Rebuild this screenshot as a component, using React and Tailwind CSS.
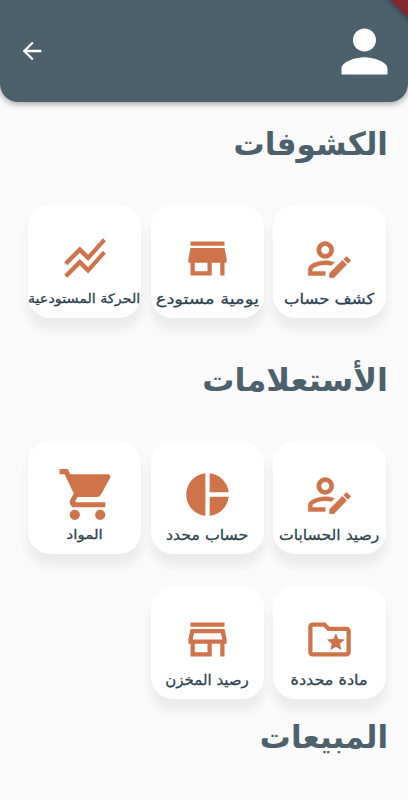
import React from "react";
import {
  MdArrowBack,
  MdOutlineFolderSpecial,
  MdOutlineStore,
  MdPerson,
  MdPieChart,
  MdShoppingCart,
  MdStackedLineChart,
  MdStore,
} from "react-icons/md";

function UserEditIcon({ className }) {
  return (
    <svg viewBox="0 0 24 24" fill="currentColor" className={className}>
      <path d="M2 17v3h8v-1.9H3.9V17c0-.64 3.13-2.1 6.1-2.1.96.01 1.91.14 2.83.38l1.52-1.52C12.95 13.28 11.49 13 10 13c-2.67 0-8 1.33-8 4M10 4C7.79 4 6 5.79 6 8s1.79 4 4 4 4-1.79 4-4-1.79-4-4-4m0 6c-1.1 0-2-.9-2-2s.9-2 2-2 2 .9 2 2-.9 2-2 2m11.7 3.35-1 1-2.05-2.05 1-1c.21-.21.56-.21.77 0l1.28 1.28c.21.21.21.56 0 .77M12 18.94V21h2.06l6.06-6.12-2.05-2.05L12 18.94" />
    </svg>
  );
}

const sections = [
  {
    title: "الكشوفات",
    titleClass: "mb-[36px] scale-x-[0.97]",
    items: [
      { label: "كشف حساب", icon: UserEditIcon, iconClass: "size-[51px] stroke-current stroke-[0.2]", labelClass: "text-[15px] scale-x-[1.1]" },
      { label: "يومية مستودع", icon: MdStore, iconClass: "size-[51px]", labelClass: "text-[15px] scale-x-[1.19]" },
      { label: "الحركة المستودعية", icon: MdStackedLineChart, iconClass: "size-[50px]", labelClass: "text-[13px] scale-x-[1.1]" },
    ],
  },
  {
    title: "الأستعلامات",
    titleClass: "mb-[36px]",
    items: [
      { label: "رصيد الحسابات", icon: UserEditIcon, iconClass: "size-[51px] stroke-current stroke-[0.2]", labelClass: "text-[15px] scale-x-[1.04]" },
      { label: "حساب محدد", icon: MdPieChart, iconClass: "size-[51px]", labelClass: "text-[15px] scale-x-[1.05]" },
      { label: "المواد", icon: MdShoppingCart, iconClass: "size-[61px] translate-x-[3px]", labelClass: "text-[13px] scale-x-[1.16]" },
      { label: "مادة محددة", icon: MdOutlineFolderSpecial, iconClass: "size-[51px]", labelClass: "text-[15px] scale-x-[1.07]" },
      { label: "رصيد المخزن", icon: MdOutlineStore, iconClass: "size-[51px]", labelClass: "text-[15px]" },
    ],
  },
  { title: "المبيعات", titleClass: "scale-x-[0.965]", items: [] },
];

function Header() {
  return (
    <header
      dir="ltr"
      className="relative flex h-[102px] items-center justify-between overflow-hidden rounded-b-[18px] bg-[#4d616c] pr-[9px] pl-[18px] text-white"
    >
      <MdArrowBack className="size-7" />
      <MdPerson className="size-[69px]" />
      <div className="absolute -top-[17px] -right-[27px] h-[26px] w-[60px] rotate-45 bg-[#84292e] shadow-[0_0_6px_rgba(0,0,0,0.5)]"></div>
    </header>
  );
}

function Card({ item }) {
  const Icon = item.icon;
  return (
    <button className="flex h-[113px] w-[113px] flex-col items-center rounded-[22px] bg-white shadow-[0_11px_10px_1px_rgba(0,0,0,0.06)]">
      <span className="flex h-[106px] w-full shrink-0 items-center justify-center text-[#cf734b]">
        <Icon className={`shrink-0 ${item.iconClass}`} />
      </span>
      <span
        className={`-mt-[22px] block leading-5 whitespace-nowrap text-[#2f434e] [-webkit-text-stroke:0.3px_#2f434e] ${item.labelClass}`}
      >
        {item.label}
      </span>
    </button>
  );
}

function Section({ section }) {
  return (
    <section>
      <h2 className={`mr-5 origin-right text-[32px] leading-[50px] font-bold whitespace-nowrap text-[#4d616c] ${section.titleClass}`}>
        {section.title}
      </h2>
      <div className="flex flex-wrap gap-x-[9.5px] gap-y-8 pr-[22px]">
        {section.items.map((item) => (
          <Card key={item.label} item={item} />
        ))}
      </div>
    </section>
  );
}

export default function App() {
  return (
    <div className="h-[800px] w-[408px] overflow-hidden bg-[#fafafa] font-['DejaVu_Sans',sans-serif]" dir="rtl">
      <div className="rounded-b-[18px] shadow-[0_2px_6px_rgba(0,0,0,0.35)]">
        <Header />
      </div>
      <main className="flex flex-col pt-[17px]">
        {sections.map((section, i) => (
          <div key={section.title} className={i === 0 ? "pb-[37px]" : "pb-[13px]"}>
            <Section section={section} />
          </div>
        ))}
      </main>
    </div>
  );
}
